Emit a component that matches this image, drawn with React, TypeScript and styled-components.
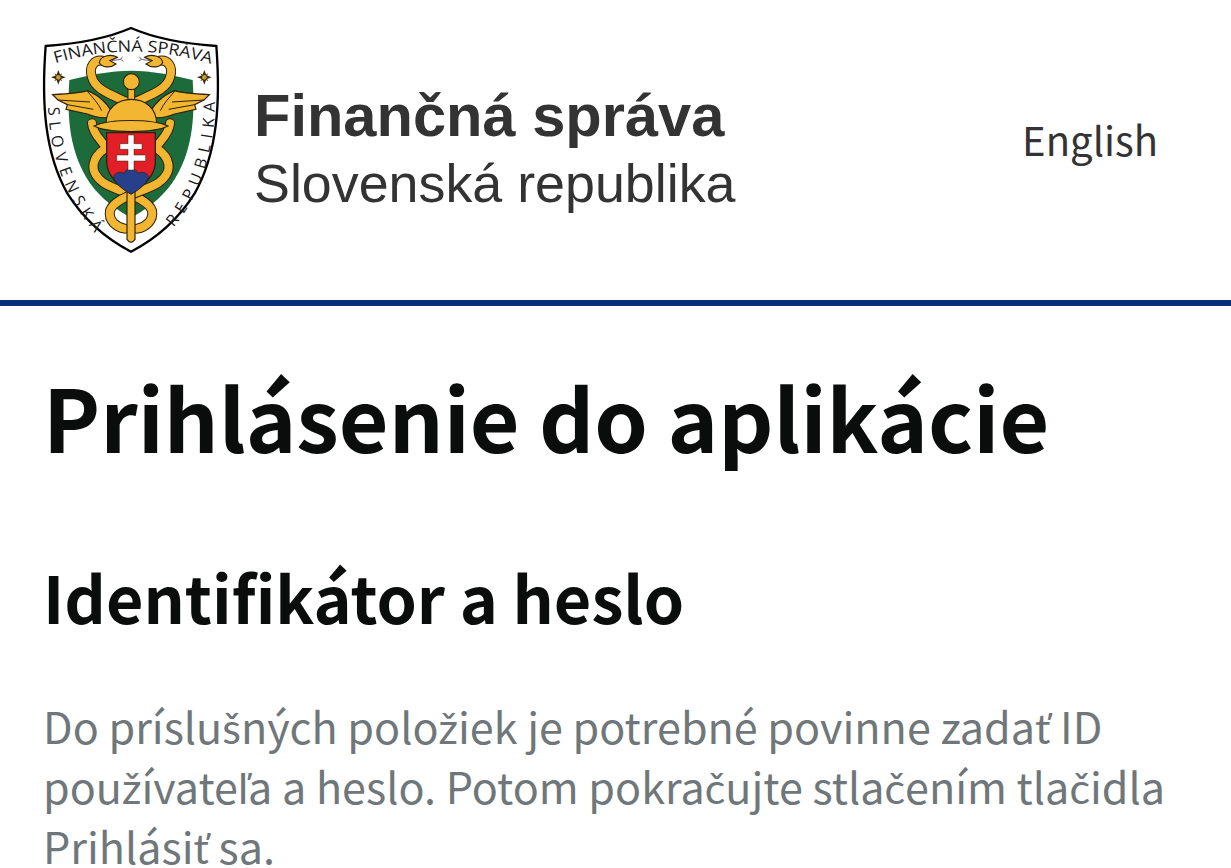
import React from "react";
import styled, { createGlobalStyle } from "styled-components";

const GlobalStyle = createGlobalStyle`
  html, body {
    margin: 0;
    padding: 0;
    background: #fff;
    overflow: hidden;
  }
`;

const gold = "#f2b632";
const line = "#2e2208";

function Strand({ d, w = 24 }: { d: string; w?: number }) {
  return (
    <>
      <path d={d} fill="none" stroke={line} strokeWidth={w + 6} strokeLinecap="round" />
      <path d={d} fill="none" stroke={gold} strokeWidth={w} strokeLinecap="round" />
    </>
  );
}

function Star({ x, y }: { x: number; y: number }) {
  return (
    <g transform={`translate(${x} ${y})`}>
      <path d="M0 -22 L6 -6 L22 0 L6 6 L0 22 L-6 6 L-22 0 L-6 -6 Z" fill="#3a2c0c" />
      <path d="M-12 -12 L0 -5 L12 -12 L5 0 L12 12 L0 5 L-12 12 L-5 0 Z" fill="#3a2c0c" />
      <circle r="7" fill="#c89b2e" />
    </g>
  );
}

function Wing({ flip }: { flip?: boolean }) {
  return (
    <g transform={flip ? "matrix(-1 0 0 1 606 0)" : undefined}>
      <path
        d="M68 224 C 110 222 150 220 172 212 C 205 225 235 250 252 290 C 225 296 195 292 172 282 L 108 268 L 112 254 L 84 240 Z"
        fill={gold}
        stroke={line}
        strokeWidth="3.5"
      />
      <path d="M84 240 L 180 246 M112 254 L 190 268 M172 214 C 190 235 205 250 215 272" fill="none" stroke={line} strokeWidth="3" />
    </g>
  );
}

function Logo() {
  return (
    <LogoSvg viewBox="0 0 600 720" aria-label="Finančná správa">
      <defs>
        <path id="arcTop" d="M76 130 Q 304 60 537 130" />
        <path id="arcLeft" d="M54 262 C 60 400 100 520 187 630" />
        <path id="arcRight" d="M430 622 C 510 530 552 400 555 250" />
      </defs>
      <path
        d="M303 24 C 220 60 135 72 47 78 C 34 250 44 400 112 520 C 165 604 236 660 303 695 C 370 660 441 604 494 520 C 562 400 572 250 559 78 C 471 72 386 60 303 24 Z"
        fill="#fff"
        stroke="#000"
        strokeWidth="7"
      />
      <path
        d="M118 180 C 180 165 240 152 303 152 C 366 152 426 165 488 180 C 496 300 486 400 426 490 C 390 540 345 570 303 594 C 261 570 216 540 180 490 C 120 400 110 300 118 180 Z"
        fill="#1d6b3a"
      />
      <LogoText fontSize="48"><textPath href="#arcTop" textLength="474" lengthAdjust="spacingAndGlyphs">FINANČNÁ SPRÁVA</textPath></LogoText>
      <LogoText fontSize="48"><textPath href="#arcLeft" textLength="410" lengthAdjust="spacing">SLOVENSKÁ</textPath></LogoText>
      <LogoText fontSize="48"><textPath href="#arcRight" textLength="405" lengthAdjust="spacing">REPUBLIKA</textPath></LogoText>
      <Star x={85} y={172} />
      <Star x={523} y={172} />

      <Strand d="M226 124 C 190 114 176 142 186 172 C 196 212 250 225 306 254" />
      <Strand d="M380 124 C 416 114 430 142 420 172 C 410 212 356 225 300 254" />
      <path d="M208 128 C 210 108 242 100 262 112 L 240 122 L 258 132 C 240 146 216 142 208 128 Z" fill={gold} stroke={line} strokeWidth="3.5" />
      <path d="M398 128 C 396 108 364 100 344 112 L 366 122 L 348 132 C 366 146 390 142 398 128 Z" fill={gold} stroke={line} strokeWidth="3.5" />
      <path d="M246 122 L 272 118 M272 118 L 278 110 M272 118 L 280 124 M360 122 L 334 118 M334 118 L 328 110 M334 118 L 326 124" fill="none" stroke="#222" strokeWidth="2" />

      <Strand d="M186 310 C 190 350 226 368 226 385 C 188 410 172 452 220 488 C 262 516 352 530 366 572 C 372 602 345 622 322 626" />
      <Strand d="M420 310 C 416 350 380 368 380 385 C 418 410 434 452 386 488 C 344 516 254 530 240 572 C 234 602 261 622 284 626" />

      <path d="M291 510 H 315 V 658 Q 303 676 291 658 Z" fill={gold} stroke={line} strokeWidth="3.5" />

      <Wing />
      <Wing flip />

      <path d="M230 338 H 376 V 425 C 376 470 338 500 303 522 C 268 500 230 470 230 425 Z" fill="#e21f26" stroke={line} strokeWidth="4" />
      <path d="M250 472 C 254 456 272 454 282 460 C 288 442 318 442 324 460 C 334 454 352 456 356 472 C 344 498 322 512 303 522 C 284 512 262 498 250 472 Z" fill="#27408b" stroke={line} strokeWidth="2" />
      <path d="M294 345 H 312 V 371 H 336 V 388 H 312 V 405 H 347 V 423 H 312 V 450 H 294 V 423 H 260 V 405 H 294 V 388 H 270 V 371 H 294 Z" fill="#fff" stroke={line} strokeWidth="1.5" />

      <path d="M294 200 H 314 V 244 H 294 Z" fill={gold} stroke={line} strokeWidth="3" />
      <circle cx="304" cy="185" r="24" fill={gold} stroke={line} strokeWidth="3.5" />
      <path d="M228 312 C 228 265 262 238 304 238 C 346 238 380 265 380 312 Z" fill={gold} stroke={line} strokeWidth="3.5" />
      <path d="M192 318 C 240 296 366 296 414 318 C 372 340 234 340 192 318 Z" fill={gold} stroke={line} strokeWidth="3.5" />
    </LogoSvg>
  );
}

// the CJK family has no Latin Extended-A letters, they take a neighbouring family
function Latin({ children }: { children: string }) {
  const parts = children.split(/([šžčťľ])/);
  return (
    <>
      {parts.map((part, i) => (i % 2 ? <ExtLetter key={i}>{part}</ExtLetter> : part))}
    </>
  );
}

export default function App() {
  return (
    <>
      <GlobalStyle />
      <Header>
        <Brand>
          <Logo />
          <BrandText>
            <BrandName>Finančná správa</BrandName>
            <BrandCountry>Slovenská republika</BrandCountry>
          </BrandText>
        </Brand>
        <LangLink href="#">English</LangLink>
      </Header>
      <Main>
        <Title>Prihlásenie do aplikácie</Title>
        <Subtitle>Identifikátor a heslo</Subtitle>
        <Lead>
          <Latin>
            Do príslušných položiek je potrebné povinne zadať ID používateľa a heslo. Potom pokračujte stlačením tlačidla Prihlásiť sa.
          </Latin>
        </Lead>
      </Main>
    </>
  );
}

const Header = styled.header`
  display: flex;
  justify-content: space-between;
  align-items: center;
  box-sizing: border-box;
  height: 306px;
  padding: 0 73px 20px 30px;
  border-bottom: 6px solid #003078;
`;

const Brand = styled.div`
  display: flex;
  align-items: center;
  gap: 24px;
`;

const LogoSvg = styled.svg`
  display: block;
  width: 200px;
  height: 240px;
`;

const LogoText = styled.text`
  font-family: "Open Sans", sans-serif;
  fill: #1a1a1a;
`;

const BrandText = styled.div`
  display: flex;
  flex-direction: column;
  padding-top: 16px;
  font-family: "Liberation Sans", Arial, sans-serif;
  color: #333;
`;

const BrandName = styled.div`
  font-size: 59.6px;
  line-height: 69px;
  font-weight: 700;
`;

const BrandCountry = styled.div`
  font-size: 53.8px;
  line-height: 66px;
`;

const LangLink = styled.a`
  margin-bottom: 2px;
  font-family: "Noto Sans CJK SC", "Noto Sans", sans-serif;
  font-size: 40px;
  line-height: 50px;
  color: #333;
  text-decoration: none;
`;

const Main = styled.main`
  padding: 60px 43px 0;
  font-family: "Noto Sans CJK SC", "Noto Sans", sans-serif;
`;

const Title = styled.h1`
  margin: 0 0 92px;
  font-size: 85.8px;
  line-height: 100px;
  font-weight: 700;
  color: #0b0c0c;
`;

const Subtitle = styled.h2`
  margin: 0 0 61px;
  font-size: 64.6px;
  line-height: 76px;
  font-weight: 700;
  color: #0b0c0c;
`;

const Lead = styled.p`
  margin: 0;
  font-size: 43.1px;
  line-height: 60px;
  color: #6f777b;
`;

const ExtLetter = styled.span`
  font-family: "Lato", "Noto Sans", sans-serif;
  line-height: 0;
`;
